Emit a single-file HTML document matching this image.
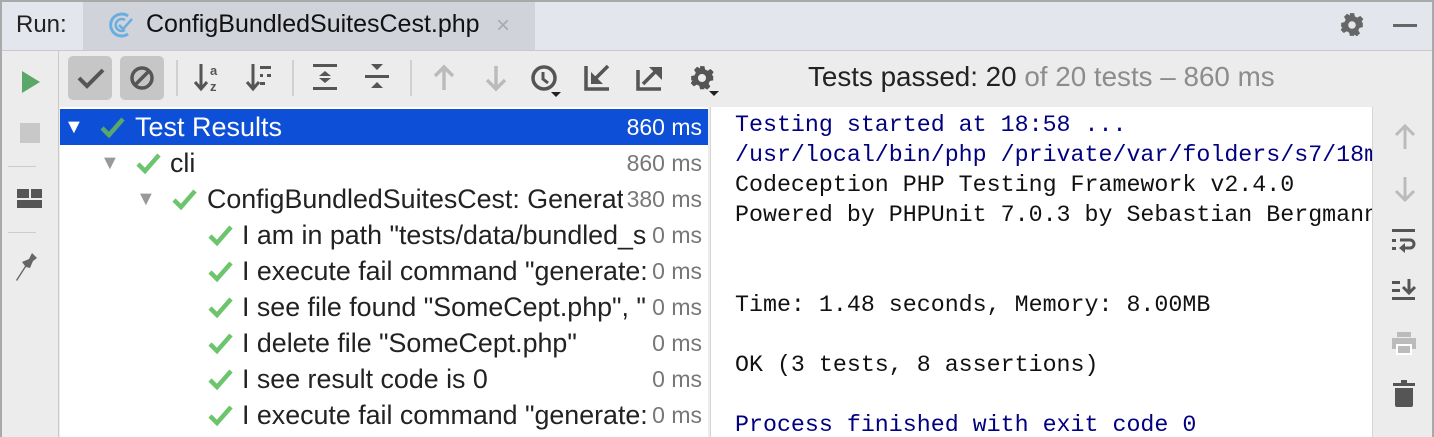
<!DOCTYPE html>
<html><head><meta charset="utf-8"><style>
*{margin:0;padding:0;box-sizing:border-box}
body{width:1434px;height:437px;overflow:hidden;background:#a9a9a9;font-family:"Liberation Sans",sans-serif;position:relative}
.a{position:absolute}
#hdr{left:2px;top:2px;width:1430px;height:48px;background:#e3e6ec}
#tab{left:83px;top:2px;width:452px;height:48px;background:#d0d4da}
#main{left:2px;top:51px;width:1430px;height:386px;background:#ececec}
#tree{left:60px;top:107px;width:648px;height:330px;background:#fff;overflow:hidden}
#con{left:710px;top:107px;width:663px;height:330px;background:#fff;overflow:hidden;border-left:1px solid #d6d6d6;border-right:1px solid #d6d6d6}
.row{position:absolute;left:0;width:648px;height:36px;font-size:26.8px;line-height:36px;color:#222;white-space:nowrap}
.row .t{position:absolute;overflow:hidden}
.row .ms{position:absolute;right:6px;color:#777;font-size:23px}
.mono{position:absolute;left:24px;font-family:"Liberation Mono",monospace;font-size:23.3px;white-space:nowrap;color:#111}
.blue{color:#000080}
svg{position:absolute}
</style></head><body>
<div class="a" id="hdr"></div>
<div class="a" id="tab"></div>
<div class="a" style="left:16px;top:11px;font-size:24px;color:#222">Run:</div>
<svg style="left:106px;top:10px" width="30" height="30" viewBox="0 0 30 30"><path d="M22 6A11 11 0 1 0 22 24" stroke="#6aaee0" stroke-width="3" fill="none"/><path d="M19 10A6 6 0 1 0 19 20" stroke="#6aaee0" stroke-width="2.5" fill="none"/><path d="M13 15l4 4 9-10" stroke="#6aaee0" stroke-width="2.5" fill="none"/></svg>
<div class="a" style="left:146px;top:10px;font-size:25px;color:#111">ConfigBundledSuitesCest.php</div>
<div class="a" style="left:496px;top:12px;font-size:24px;color:#aaa">×</div>
<svg style="left:1339px;top:12px" width="26" height="26" viewBox="0 0 24 24"><path fill="#666" d="M10 1h4l.6 3 2.3 1.2 2.7-1.6 2.8 2.8-1.6 2.7L22 10v4l-3 .6-1.2 2.3 1.6 2.7-2.8 2.8-2.7-1.6L14 22h-4l-.6-3-2.3-1.2-2.7 1.6-2.8-2.8 1.6-2.7L2 14v-4l3-.6 1.2-2.3-1.6-2.7 2.8-2.8 2.7 1.6z"/><circle cx="12" cy="12" r="3.5" fill="#e3e6ec"/></svg>
<div class="a" style="left:1393px;top:24px;width:24px;height:3px;background:#666"></div>
<div class="a" id="main"></div>
<div class="a" style="left:2px;top:50px;width:1430px;height:1px;background:#c9c9c9"></div>
<div class="a" style="left:58px;top:51px;width:1px;height:386px;background:#c9c9c9"></div>
<svg style="left:20px;top:70px" width="22" height="24"><path d="M2 1l18 11-18 11z" fill="#59a869"/></svg>
<div class="a" style="left:20px;top:123px;width:20px;height:20px;background:#c8c8c8"></div>
<div class="a" style="left:8px;top:166px;width:28px;height:1px;background:#ccc"></div>
<svg style="left:17px;top:189px" width="26" height="22"><rect x="0" y="0" width="12" height="9" fill="#555"/><rect x="14" y="0" width="11" height="9" fill="#555"/><rect x="0" y="11" width="25" height="8" fill="#555"/></svg>
<div class="a" style="left:8px;top:232px;width:28px;height:1px;background:#ccc"></div>
<svg style="left:14px;top:252px" width="24" height="30"><path d="M18 1l5 5-4 3-3 7-4-1-9 14-1-1 9-14-3-4 7-3z" fill="#666"/></svg>
<div class="a" style="left:68px;top:56px;width:44px;height:44px;background:#c6c6c6;border-radius:5px"></div>
<div class="a" style="left:120px;top:56px;width:44px;height:44px;background:#c6c6c6;border-radius:5px"></div>
<svg style="left:76px;top:64px" width="30" height="28"><path d="M3 14l8 8 16-16" stroke="#555" stroke-width="4" fill="none"/></svg>
<svg style="left:128px;top:64px" width="28" height="28"><circle cx="14" cy="14" r="10" stroke="#555" stroke-width="3.5" fill="none"/><path d="M7 21L21 7" stroke="#555" stroke-width="3.5"/></svg>
<div class="a" style="left:176px;top:60px;width:2px;height:36px;background:#d0d0d0"></div>
<svg style="left:193px;top:62px" width="30" height="32"><path d="M8 2v24M2 20l6 7 6-7" stroke="#555" stroke-width="3" fill="none"/><text x="17" y="13" font-size="13" font-family="Liberation Sans" fill="#555" font-weight="bold">a</text><text x="17" y="29" font-size="13" font-family="Liberation Sans" fill="#555" font-weight="bold">z</text></svg>
<svg style="left:245px;top:62px" width="30" height="32"><path d="M8 2v24M2 20l6 7 6-7" stroke="#555" stroke-width="3" fill="none"/><rect x="15" y="4" width="11" height="3" fill="#555"/><rect x="15" y="12" width="3" height="3" fill="#555"/><rect x="22" y="12" width="4" height="3" fill="#555"/><rect x="15" y="20" width="5" height="3" fill="#555"/></svg>
<div class="a" style="left:292px;top:60px;width:2px;height:36px;background:#d0d0d0"></div>
<svg style="left:313px;top:64px" width="26" height="30"><rect x="0" y="0" width="24" height="3" fill="#555"/><rect x="0" y="23" width="24" height="3" fill="#555"/><path d="M6 12l6-5 6 5zM6 14l6 5 6-5z" fill="#555"/></svg>
<svg style="left:365px;top:64px" width="26" height="30"><path d="M6 0l6 6 6-6zM6 24l6-6 6 6z" fill="#555"/><rect x="0" y="11" width="24" height="3" fill="#555"/></svg>
<div class="a" style="left:410px;top:60px;width:2px;height:36px;background:#d0d0d0"></div>
<svg style="left:432px;top:64px" width="24" height="28"><path d="M12 26V3M3 12l9-9 9 9" stroke="#bbb" stroke-width="3.5" fill="none"/></svg>
<svg style="left:484px;top:64px" width="24" height="28"><path d="M12 2v23M3 16l9 9 9-9" stroke="#bbb" stroke-width="3.5" fill="none"/></svg>
<svg style="left:530px;top:64px" width="36" height="36"><circle cx="14" cy="14" r="11" stroke="#555" stroke-width="3.5" fill="none"/><path d="M13 8v7l5 4" stroke="#555" stroke-width="3" fill="none"/><path d="M21 28h10l-5 5z" fill="#222"/></svg>
<svg style="left:584px;top:64px" width="28" height="28"><path d="M2 2v23h23" stroke="#555" stroke-width="3.5" fill="none"/><path d="M9 17L24 2" stroke="#555" stroke-width="3.5"/><path d="M7 8v12h12z" fill="#555"/></svg>
<svg style="left:636px;top:64px" width="28" height="28"><path d="M2 6v19h23" stroke="#555" stroke-width="3.5" fill="none"/><path d="M7 20L22 5" stroke="#555" stroke-width="3.5"/><path d="M13 3h13v13z" fill="#555"/></svg>
<svg style="left:688px;top:64px" width="34" height="36"><g transform="translate(1,1)"><path fill="#555" d="M10 1h4l.6 3 2.3 1.2 2.7-1.6 2.8 2.8-1.6 2.7L22 10v4l-3 .6-1.2 2.3 1.6 2.7-2.8 2.8-2.7-1.6L14 22h-4l-.6-3-2.3-1.2-2.7 1.6-2.8-2.8 1.6-2.7L2 14v-4l3-.6 1.2-2.3-1.6-2.7 2.8-2.8 2.7 1.6z" transform="scale(1.1)"/><circle cx="13" cy="13" r="4" fill="#ececec"/></g><path d="M21 27h10l-5 5z" fill="#222"/></svg>
<div class="a" style="left:808px;top:61px;font-size:27.8px;color:#222;white-space:nowrap">Tests passed: 20 <span style="color:#8c8c8c">of 20 tests – 860 ms</span></div>
<div class="a" id="tree">
<div class="row" style="top:2px;background:#0d4fd6;color:#fff"><span class="t" style="left:4px;font-size:20px">▼</span><svg style="left:40px;top:8px" width="26" height="22"><path d="M2 11l7 7 14-16" stroke="#59a869" stroke-width="4.5" fill="none"/></svg><span class="t" style="left:75px;font-size:27px">Test Results</span><span class="ms" style="color:#fff">860 ms</span></div>
<div class="row" style="top:38px"><span class="t" style="left:40px;color:#999;font-size:20px">▼</span><svg style="left:76px;top:8px" width="26" height="22"><path d="M2 11l7 7 14-16" stroke="#6cc56c" stroke-width="4.5" fill="none"/></svg><span class="t" style="left:110px">cli</span><span class="ms">860 ms</span></div>
<div class="row" style="top:74px"><span class="t" style="left:76px;color:#999;font-size:20px">▼</span><svg style="left:112px;top:8px" width="26" height="22"><path d="M2 11l7 7 14-16" stroke="#6cc56c" stroke-width="4.5" fill="none"/></svg><span class="t" style="left:147px;width:416px">ConfigBundledSuitesCest: GenerateSuite</span><span class="ms">380 ms</span></div>
<div class="row" style="top:110px"><svg style="left:148px;top:8px" width="26" height="22"><path d="M2 11l7 7 14-16" stroke="#6cc56c" stroke-width="4.5" fill="none"/></svg><span class="t" style="left:182px;width:404px">I am in path "tests/data/bundled_suites"</span><span class="ms">0 ms</span></div>
<div class="row" style="top:146px"><svg style="left:148px;top:8px" width="26" height="22"><path d="M2 11l7 7 14-16" stroke="#6cc56c" stroke-width="4.5" fill="none"/></svg><span class="t" style="left:182px;width:404px">I execute fail command "generate:cept"</span><span class="ms">0 ms</span></div>
<div class="row" style="top:182px"><svg style="left:148px;top:8px" width="26" height="22"><path d="M2 11l7 7 14-16" stroke="#6cc56c" stroke-width="4.5" fill="none"/></svg><span class="t" style="left:182px;width:404px">I see file found "SomeCept.php", "x"</span><span class="ms">0 ms</span></div>
<div class="row" style="top:218px"><svg style="left:148px;top:8px" width="26" height="22"><path d="M2 11l7 7 14-16" stroke="#6cc56c" stroke-width="4.5" fill="none"/></svg><span class="t" style="left:182px;width:404px">I delete file "SomeCept.php"</span><span class="ms">0 ms</span></div>
<div class="row" style="top:254px"><svg style="left:148px;top:8px" width="26" height="22"><path d="M2 11l7 7 14-16" stroke="#6cc56c" stroke-width="4.5" fill="none"/></svg><span class="t" style="left:182px;width:404px">I see result code is 0</span><span class="ms">0 ms</span></div>
<div class="row" style="top:290px"><svg style="left:148px;top:8px" width="26" height="22"><path d="M2 11l7 7 14-16" stroke="#6cc56c" stroke-width="4.5" fill="none"/></svg><span class="t" style="left:182px;width:404px">I execute fail command "generate:test"</span><span class="ms">0 ms</span></div>
</div>
<div class="a" id="con">
<div class="mono blue" style="top:5px">Testing started at 18:58 ...</div>
<div class="mono blue" style="top:35px">/usr/local/bin/php /private/var/folders/s7/18m</div>
<div class="mono" style="top:65px">Codeception PHP Testing Framework v2.4.0</div>
<div class="mono" style="top:95px">Powered by PHPUnit 7.0.3 by Sebastian Bergmann</div>
<div class="mono" style="top:185px">Time: 1.48 seconds, Memory: 8.00MB</div>
<div class="mono" style="top:245px">OK (3 tests, 8 assertions)</div>
<div class="mono blue" style="top:305px">Process finished with exit code 0</div>
</div>
<svg style="left:1393px;top:123px" width="24" height="28"><path d="M12 26V3M3 12l9-9 9 9" stroke="#bbb" stroke-width="3" fill="none"/></svg>
<svg style="left:1393px;top:175px" width="24" height="28"><path d="M12 2v23M3 16l9 9 9-9" stroke="#bbb" stroke-width="3" fill="none"/></svg>
<svg style="left:1390px;top:227px" width="28" height="28"><rect x="2" y="2" width="23" height="3" fill="#555"/><rect x="2" y="12" width="4" height="3" fill="#555"/><rect x="2" y="20" width="4" height="3" fill="#555"/><path d="M10 13h10a4 4 0 0 1 0 8H13" stroke="#555" stroke-width="3" fill="none"/><path d="M9 21l6-5v10z" fill="#555"/></svg>
<svg style="left:1390px;top:278px" width="28" height="28"><rect x="2" y="3" width="8" height="3" fill="#555"/><rect x="2" y="11" width="8" height="3" fill="#555"/><rect x="2" y="19" width="23" height="3" fill="#555"/><path d="M19 1v13M13 9l6 6 6-6" stroke="#555" stroke-width="3" fill="none"/></svg>
<svg style="left:1391px;top:331px" width="28" height="28"><rect x="6" y="1" width="14" height="5" fill="#bbb"/><rect x="1" y="7" width="24" height="11" fill="#bbb"/><rect x="6" y="14" width="14" height="9" fill="#bbb" stroke="#fff" stroke-width="2"/></svg>
<svg style="left:1393px;top:380px" width="24" height="30"><rect x="0" y="3" width="22" height="3" fill="#555"/><rect x="8" y="0" width="6" height="3" fill="#555"/><path d="M2 8h18v17a2 2 0 0 1-2 2H4a2 2 0 0 1-2-2z" fill="#555"/></svg>
</body></html>
